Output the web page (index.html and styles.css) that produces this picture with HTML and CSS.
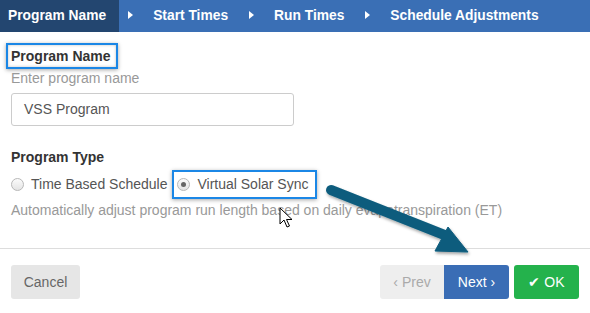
FILE: index.html
```html
<!DOCTYPE html>
<html lang="en">
<head>
    <meta charset="UTF-8">
    <title>Program Wizard</title>
    <link rel="stylesheet" href="styles.css">
</head>
<body>
    <div class="wizard">
        <nav class="steps">
            <div class="step active">Program Name</div>
            <div class="step">Start Times</div>
            <div class="step">Run Times</div>
            <div class="step">Schedule Adjustments</div>
        </nav>
        <div class="form">
            <div class="label"><span class="callout">Program Name</span></div>
            <div class="hint">Enter program name</div>
            <div class="input">VSS Program</div>
            <div class="label type">Program Type</div>
            <div class="radios">
                <label class="radio"><span class="dot"></span>Time Based Schedule</label>
                <label class="radio callout-radio"><span class="dot checked"></span>Virtual Solar Sync</label>
            </div>
            <div class="hint desc">Automatically adjust program run length based on daily evapotranspiration (ET)</div>
        </div>
        <div class="footer">
            <button class="btn cancel">Cancel</button>
            <div class="nav-buttons">
                <button class="btn prev">&lsaquo; Prev</button>
                <button class="btn next">Next &rsaquo;</button>
                <button class="btn ok"><span class="check">&#10004;</span> OK</button>
            </div>
        </div>
        <!-- annotation arrow -->
        <svg class="arrow" width="590" height="313" viewBox="0 0 590 313">
            <defs>
                <filter id="shade" x="-20%" y="-20%" width="140%" height="140%">
                    <feDropShadow dx="1" dy="2" stdDeviation="1.5" flood-color="#000" flood-opacity="0.35"/>
                </filter>
            </defs>
            <g filter="url(#shade)" fill="#0b5c7d" stroke="#0b5c7d">
                <line x1="331" y1="190" x2="447" y2="236" stroke-width="10" stroke-linecap="round"/>
                <polygon points="448,227 435,251 468,252" stroke-width="1" stroke-linejoin="round"/>
            </g>
        </svg>
        <svg class="pointer" width="14" height="22" viewBox="0 0 14 22">
            <path d="M1 1 L1 17 L5 13 L8 20 L10.5 19 L7.5 12.5 L13 12.5 Z" fill="#fff" stroke="#000" stroke-width="1"/>
        </svg>
    </div>
</body>
</html>
```

FILE: styles.css
```css
* {
    margin: 0;
    padding: 0;
    box-sizing: border-box;
}
body {
    font-family: 'Liberation Sans', Arial, sans-serif;
    background: #fff;
    color: #333;
}
.wizard {
    position: relative;
    width: 590px;
    height: 313px;
    overflow: hidden;
}
.steps {
    display: flex;
    height: 32px;
    background: #3a6fb5;
}
.step {
    display: flex;
    align-items: center;
    color: #fff;
    font-weight: bold;
    font-size: 13.8px;
    padding: 0 12px 2px 9px;
}
.step::before {
    content: '';
    border-left: 5px solid #fff;
    border-top: 4px solid transparent;
    border-bottom: 4px solid transparent;
    margin-right: 20px;
}
.step.active {
    background: #234670;
    padding: 0 13px 2px 8px;
}
.step.active::before {
    display: none;
}
.form {
    padding: 0 11px;
}
.label {
    font-weight: bold;
    font-size: 14px;
    color: #333;
    margin-top: 14px;
    line-height: 16px;
}
.callout {
    display: inline-block;
    border: 2px solid #1b87e6;
    margin: -3px -5px -4px -5px;
    padding: 3px 5px 3px 3px;
    box-shadow: 0 1px 4px rgba(0, 0, 0, 0.35), inset 0 0 3px rgba(0, 0, 0, 0.25);
}
.hint {
    font-size: 14px;
    color: #999;
    margin-top: 5px;
    line-height: 16px;
}
.input {
    margin-top: 7px;
    width: 283px;
    height: 33px;
    border: 1px solid #ccc;
    border-radius: 3px;
    font-size: 14px;
    color: #555;
    padding: 0 12px;
    line-height: 31px;
}
.label.type {
    margin-top: 23px;
}
.radios {
    display: flex;
    margin-top: 11px;
    font-size: 14px;
    color: #555;
    line-height: 16px;
}
.radio {
    display: flex;
    align-items: center;
}
.dot {
    width: 13px;
    height: 13px;
    border-radius: 50%;
    border: 1px solid #b8b8b8;
    background: linear-gradient(#fbfbfb, #e4e4e4);
    margin-right: 7px;
    position: relative;
}
.dot.checked::after {
    content: '';
    position: absolute;
    left: 3px;
    top: 3px;
    width: 5px;
    height: 5px;
    border-radius: 50%;
    background: #666;
}
.callout-radio {
    margin-left: 5px;
    border: 2px solid #1b87e6;
    padding: 4px 7px 5px 3px;
    margin-top: -6px;
    margin-bottom: -7px;
    box-shadow: 0 1px 4px rgba(0, 0, 0, 0.35);
}
.desc {
    margin-top: 10px;
}
.footer {
    position: relative;
    margin-top: 30px;
    border-top: 1px solid #ddd;
    display: flex;
    justify-content: space-between;
    padding: 16px 11px 0;
}
.btn {
    font-family: 'Liberation Sans', Arial, sans-serif;
    font-size: 14px;
    height: 34px;
    border: none;
    border-radius: 3px;
    padding: 0 12px;
}
.cancel {
    width: 69px;
    background: #e6e6e6;
    color: #666;
}
.nav-buttons {
    display: flex;
}
.prev {
    width: 64px;
    background: #eee;
    color: #aaa;
    border-radius: 3px 0 0 3px;
}
.next {
    width: 65px;
    background: #3a6db5;
    color: #fff;
    border-radius: 0 3px 3px 0;
}
.ok {
    width: 65px;
    margin-left: 5px;
    background: #24b24c;
    color: #fff;
}
.check {
    font-size: 14px;
}
.arrow {
    position: absolute;
    left: 0;
    top: 0;
    pointer-events: none;
}
.pointer {
    position: absolute;
    left: 279px;
    top: 207px;
}
```
